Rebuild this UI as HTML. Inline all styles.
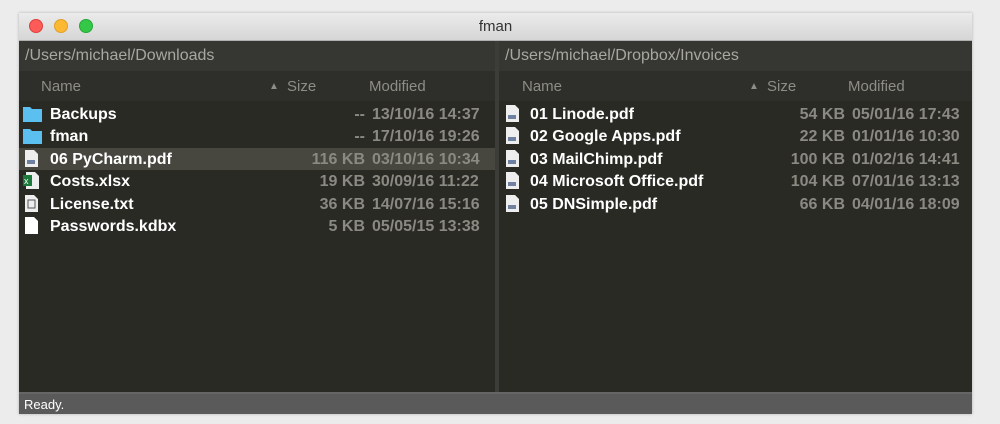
<!DOCTYPE html>
<html><head><style>
body{margin:0;width:1000px;height:424px;background:#ececec;font-family:"Liberation Sans",sans-serif;position:relative;overflow:hidden}
.win{position:absolute;left:19px;top:13px;width:953px;height:401px;background:#2a2a25;box-shadow:0 0 3px rgba(0,0,0,.25)}
.title{position:absolute;left:0;top:0;width:953px;height:27px;background:linear-gradient(#ebebeb,#d6d6d6);border-bottom:1px solid #b0b0b0;text-align:center;font-size:15px;line-height:27px;color:#333}
.dot{position:absolute;top:6px;width:14px;height:14px;border-radius:50%}
.pane{position:absolute;top:28px;height:351px;background:#2a2a25}
.path{position:absolute;left:0;top:0;right:0;height:30px;background:#363632;color:#a8a8a0;font-size:16px;line-height:30px;padding-left:6px}
.hdr{position:absolute;top:30px;left:0;right:0;height:30px;background:#2e2e2a;color:#8e8e86;font-size:15px;line-height:31px}
.hdr span{position:absolute}
.row{position:absolute;left:0;right:0;height:22px;font-size:16px;line-height:23px}
.row .n{position:absolute;color:#fff;font-weight:bold}
.row .s{position:absolute;text-align:right;color:#8a8a82;font-weight:bold}
.row .d{position:absolute;color:#8a8a82;font-weight:bold}
.sel{background:#47473f}
.status{position:absolute;left:0;top:379px;width:953px;height:22px;background:#5a5a5a;border-top:2px solid #666;color:#fff;font-size:13px;line-height:22px;padding-left:5px;box-sizing:border-box}
.ic{position:absolute;top:2px}
</style></head><body>
<div class="win">
<div class="title">fman
<div class="dot" style="left:10px;background:#fc5b57;border:1px solid #de3f3b;width:12px;height:12px"></div>
<div class="dot" style="left:35px;background:#fdb831;border:1px solid #dea02a;width:12px;height:12px"></div>
<div class="dot" style="left:60px;background:#35c748;border:1px solid #27a836;width:12px;height:12px"></div>
</div>

<div class="pane" style="left:0;width:476px">
<div class="path">/Users/michael/Downloads</div>
<div class="hdr"><span style="left:22px">Name</span><span style="left:250px;font-size:10px">▲</span><span style="left:268px">Size</span><span style="left:350px">Modified</span></div>
</div>
<div style="position:absolute;left:476px;top:28px;width:4px;height:351px;background:#3c3c38"></div>
<div class="pane" style="left:480px;width:473px">
<div class="path">/Users/michael/Dropbox/Invoices</div>
<div class="hdr"><span style="left:23px">Name</span><span style="left:250px;font-size:10px">▲</span><span style="left:268px">Size</span><span style="left:349px">Modified</span></div>
</div>

<div id="L" style="position:absolute;left:0;top:90px;width:476px">
<div class="row" style="top:0"><svg class="ic" style="left:4px" width="19" height="17"><path d="M0 2h7l2 2h10v13H0z" fill="#5bc0f0"/></svg><span class="n" style="left:31px">Backups</span><span class="s" style="right:130px">--</span><span class="d" style="left:353px">13/10/16 14:37</span></div>
<div class="row" style="top:22px"><svg class="ic" style="left:4px" width="19" height="17"><path d="M0 2h7l2 2h10v13H0z" fill="#5bc0f0"/></svg><span class="n" style="left:31px">fman</span><span class="s" style="right:130px">--</span><span class="d" style="left:353px">17/10/16 19:26</span></div>
<div class="row sel" style="top:45px"><svg class="ic" style="left:6px" width="13" height="17"><path d="M0 0h9l4 4v13H0z" fill="#eee"/><rect x="2" y="10" width="8" height="4" fill="#7080a0"/></svg><span class="n" style="left:31px">06 PyCharm.pdf</span><span class="s" style="right:130px">116 KB</span><span class="d" style="left:353px">03/10/16 10:34</span></div>
<div class="row" style="top:67px"><svg class="ic" style="left:4px" width="16" height="17"><path d="M3 0h9l4 4v13H3z" fill="#eee"/><rect x="0" y="3" width="9" height="11" fill="#1e7a3c"/><text x="1" y="12" font-size="9" fill="#fff" font-family="Liberation Sans">x</text></svg><span class="n" style="left:31px">Costs.xlsx</span><span class="s" style="right:130px">19 KB</span><span class="d" style="left:353px">30/09/16 11:22</span></div>
<div class="row" style="top:90px"><svg class="ic" style="left:6px" width="13" height="17"><path d="M0 0h9l4 4v13H0z" fill="#eee"/><rect x="3" y="5" width="7" height="8" fill="none" stroke="#555"/></svg><span class="n" style="left:31px">License.txt</span><span class="s" style="right:130px">36 KB</span><span class="d" style="left:353px">14/07/16 15:16</span></div>
<div class="row" style="top:112px"><svg class="ic" style="left:6px" width="13" height="17"><path d="M0 0h9l4 4v13H0z" fill="#fff"/></svg><span class="n" style="left:31px">Passwords.kdbx</span><span class="s" style="right:130px">5 KB</span><span class="d" style="left:353px">05/05/15 13:38</span></div>
</div>

<div style="position:absolute;left:480px;top:90px;width:473px">
<div class="row" style="top:0"><svg class="ic" style="left:7px" width="13" height="17"><path d="M0 0h9l4 4v13H0z" fill="#eee"/><rect x="2" y="10" width="8" height="4" fill="#7080a0"/></svg><span class="n" style="left:31px">01 Linode.pdf</span><span class="s" style="right:127px">54 KB</span><span class="d" style="left:353px">05/01/16 17:43</span></div>
<div class="row" style="top:22px"><svg class="ic" style="left:7px" width="13" height="17"><path d="M0 0h9l4 4v13H0z" fill="#eee"/><rect x="2" y="10" width="8" height="4" fill="#7080a0"/></svg><span class="n" style="left:31px">02 Google Apps.pdf</span><span class="s" style="right:127px">22 KB</span><span class="d" style="left:353px">01/01/16 10:30</span></div>
<div class="row" style="top:45px"><svg class="ic" style="left:7px" width="13" height="17"><path d="M0 0h9l4 4v13H0z" fill="#eee"/><rect x="2" y="10" width="8" height="4" fill="#7080a0"/></svg><span class="n" style="left:31px">03 MailChimp.pdf</span><span class="s" style="right:127px">100 KB</span><span class="d" style="left:353px">01/02/16 14:41</span></div>
<div class="row" style="top:67px"><svg class="ic" style="left:7px" width="13" height="17"><path d="M0 0h9l4 4v13H0z" fill="#eee"/><rect x="2" y="10" width="8" height="4" fill="#7080a0"/></svg><span class="n" style="left:31px">04 Microsoft Office.pdf</span><span class="s" style="right:127px">104 KB</span><span class="d" style="left:353px">07/01/16 13:13</span></div>
<div class="row" style="top:90px"><svg class="ic" style="left:7px" width="13" height="17"><path d="M0 0h9l4 4v13H0z" fill="#eee"/><rect x="2" y="10" width="8" height="4" fill="#7080a0"/></svg><span class="n" style="left:31px">05 DNSimple.pdf</span><span class="s" style="right:127px">66 KB</span><span class="d" style="left:353px">04/01/16 18:09</span></div>
</div>

<div class="status">Ready.</div>
</div>
</body></html>
